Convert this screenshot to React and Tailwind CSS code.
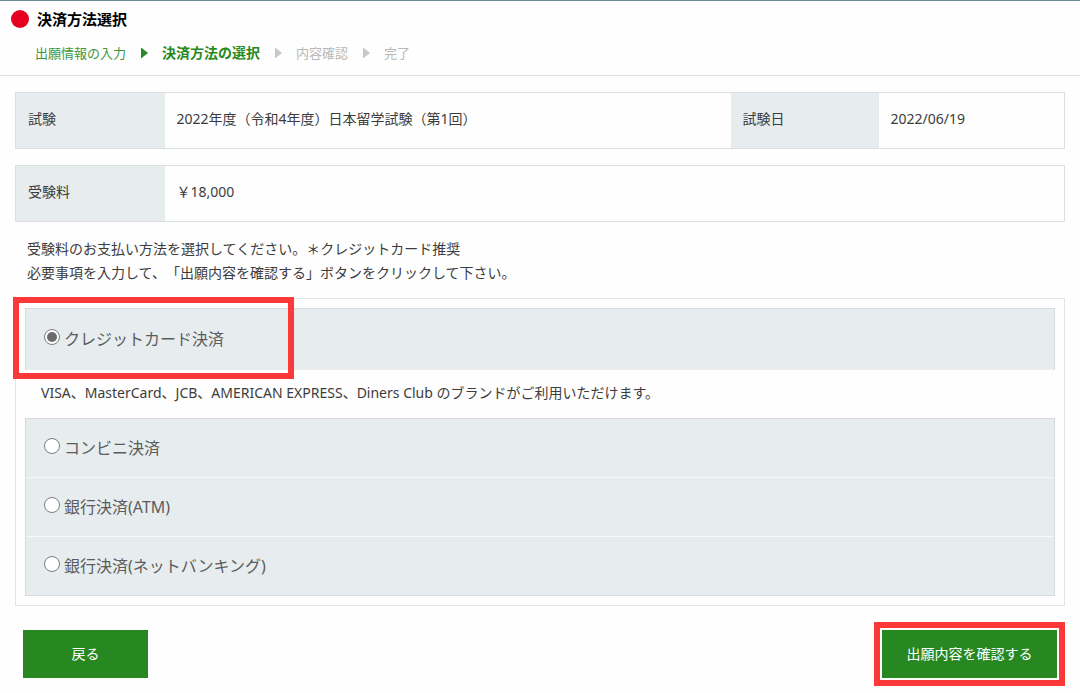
import { useState } from 'react';
import clsx from 'clsx';

const STEPS = [
  { label: '出願情報の入力', state: 'done' },
  { label: '決済方法の選択', state: 'current' },
  { label: '内容確認', state: 'todo' },
  { label: '完了', state: 'todo' },
];

const STEP_STYLES = {
  done: 'text-[13px] text-[#3d963d]',
  current: 'text-sm font-bold text-[#268a22]',
  todo: 'text-[13px] text-[#b8b8b8]',
};

const OTHER_METHODS = [
  { id: 'convenience', label: 'コンビニ決済' },
  { id: 'atm', label: '銀行決済(ATM)' },
  { id: 'netbank', label: '銀行決済(ネットバンキング)' },
];

function Arrow({ active }) {
  return (
    <svg
      width="7"
      height="12"
      viewBox="0 0 7 12"
      aria-hidden="true"
      className={active ? 'text-[#268a22]' : 'text-[#c8c8c8]'}
    >
      <path d="M0 0.5L7 6L0 11.5Z" fill="currentColor" />
    </svg>
  );
}

function Breadcrumb() {
  return (
    <ol className="flex items-center pl-[35px] leading-5">
      {STEPS.map((step, i) => (
        <li key={step.label} className="flex items-center">
          {i > 0 && (
            <span className="flex w-9 justify-center">
              <Arrow active={STEPS[i - 1].state === 'done'} />
            </span>
          )}
          <span className={STEP_STYLES[step.state]}>{step.label}</span>
        </li>
      ))}
    </ol>
  );
}

function HeadCell({ children, className }) {
  return (
    <th scope="row" className={clsx('bg-[#e7edef] px-3 pb-1 text-left font-normal', className)}>
      {children}
    </th>
  );
}

function MethodOption({ id, label, selected, onSelect }) {
  return (
    <div className="flex items-center gap-1 py-[17px] pl-[18px]">
      <input
        type="radio"
        id={id}
        name="payment"
        value={id}
        checked={selected}
        onChange={() => onSelect(id)}
        className="mb-1 grid size-4 appearance-none place-content-center rounded-full border border-[#7c7c7c] bg-white before:size-2.5 before:rounded-full checked:before:bg-[#6b6b6b]"
      />
      <label htmlFor={id} className="text-base text-[#5c5c5c]">{label}</label>
    </div>
  );
}

export default function App() {
  const [method, setMethod] = useState('credit');

  return (
    <div className="border-t border-[#6b8899] bg-[#fefefe] pb-1.5 font-['Noto_Sans','Noto_Sans_CJK_JP',sans-serif] text-sm text-[#3c3c3c] [text-spacing-trim:space-all]">
      <header className="border-b border-[#dcdcdc] pt-[7px] pb-3">
        <div className="mb-[13px] flex items-center gap-2 pl-[11px]">
          <span className="size-[18px] rounded-full bg-[#e5001f]" />
          <h1 className="text-[15px] leading-[22px] font-bold text-black">決済方法選択</h1>
        </div>
        <Breadcrumb />
      </header>

      <main className="px-[15px] pt-4">
        <table className="w-full table-fixed border border-[#dcdfe0]">
          <tbody>
            <tr className="h-[56px]">
              <HeadCell className="w-[149px]">試験</HeadCell>
              <td className="px-3 pb-1">2022年度（令和4年度）日本留学試験（第1回）</td>
              <HeadCell className="w-[148px]">試験日</HeadCell>
              <td className="w-[186px] px-3 pb-1">2022/06/19</td>
            </tr>
          </tbody>
        </table>

        <table className="mt-4 w-full table-fixed border border-[#dcdfe0]">
          <tbody>
            <tr className="h-[56px]">
              <HeadCell className="w-[149px]">受験料</HeadCell>
              <td className="px-3 pb-1">￥18,000</td>
            </tr>
          </tbody>
        </table>

        <p className="mt-[15px] pl-3 leading-6">
          受験料のお支払い方法を選択してください。＊クレジットカード推奨
          <br />
          必要事項を入力して、「出願内容を確認する」ボタンをクリックして下さい。
        </p>

        <section className="mt-[13px] border border-[#e4e4e4] p-[9px]">
          <div className="relative border border-[#d7dadb] border-b-[#ececec] bg-[#e7edef] py-px">
            <MethodOption
              id="credit"
              label="クレジットカード決済"
              selected={method === 'credit'}
              onSelect={setMethod}
            />
            <span className="pointer-events-none absolute -top-3 -bottom-2.5 -left-[13px] w-[281px] border-[6px] border-[#fd3838]" />
          </div>

          <p className="pt-[11px] pb-[13px] pl-4 leading-6">
            VISA、MasterCard、JCB、AMERICAN EXPRESS、Diners Club のブランドがご利用いただけます。
          </p>

          <div className="divide-y divide-[#f6f8f9] border border-[#d7dadb] bg-[#e7edef]">
            {OTHER_METHODS.map((m) => (
              <MethodOption
                key={m.id}
                id={m.id}
                label={m.label}
                selected={method === m.id}
                onSelect={setMethod}
              />
            ))}
          </div>
        </section>

        <div className="mt-4 flex items-center justify-between pl-2">
          <button type="button" className="h-12 w-[125px] bg-[#278822] text-white">
            戻る
          </button>
          <div className="border-[6px] border-[#fd3838] p-0.5">
            <button type="button" className="h-12 w-[175px] bg-[#278822] text-white">
              出願内容を確認する
            </button>
          </div>
        </div>
      </main>
    </div>
  );
}
